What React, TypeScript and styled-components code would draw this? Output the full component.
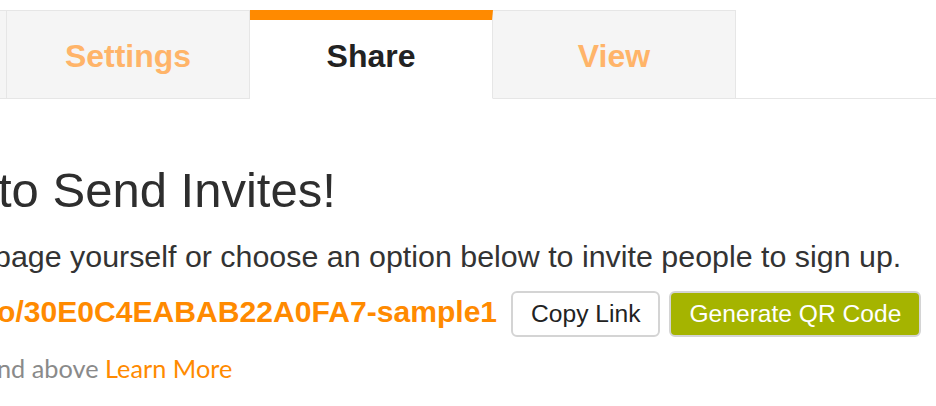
import React from "react";
import styled, { createGlobalStyle } from "styled-components";

const Global = createGlobalStyle`
  html, body { margin: 0; padding: 0; background: #ffffff; }
  body { font-family: "Liberation Sans", Arial, Helvetica, sans-serif; overflow: hidden; }
  #root { width: 936px; height: 406px; overflow: hidden; }
`;

const Page = styled.div`
  width: 936px;
  height: 406px;
  overflow: hidden;
  padding-top: 10px;
  box-sizing: border-box;
`;

const TabBar = styled.div`
  display: flex;
  border-bottom: 1px solid #e6e6e6;
  margin-left: -236px;
`;

const Tab = styled.div<{ $active?: boolean }>`
  flex: 0 0 243px;
  height: 89px;
  box-sizing: border-box;
  margin-bottom: -1px;
  display: flex;
  align-items: center;
  justify-content: center;
  font-size: 32px;
  font-weight: 700;
  border-right: 1px solid #e6e6e6;
  border-top: ${(p) => (p.$active ? "10px solid #ff8a00" : "1px solid #e6e6e6")};
  border-bottom: 1px solid ${(p) => (p.$active ? "#ffffff" : "#e6e6e6")};
  background: ${(p) => (p.$active ? "#ffffff" : "#f5f5f5")};
  color: ${(p) => (p.$active ? "#222222" : "#ffb469")};
  padding-top: ${(p) => (p.$active ? "0" : "3px")};
  padding-bottom: ${(p) => (p.$active ? "6px" : "0")};
`;

const Content = styled.div`
  display: flex;
  flex-direction: column;
  padding-top: 63px;
`;

const Heading = styled.h1<{ $shift: number }>`
  margin: 0 0 0 ${(p) => p.$shift}px;
  font-size: 49px;
  line-height: 56px;
  font-weight: 400;
  color: #2e2e2e;
  white-space: nowrap;
`;

const Lead = styled.p<{ $shift: number }>`
  margin: 20px 0 0 ${(p) => p.$shift}px;
  font-size: 30.4px;
  line-height: 36px;
  color: #333333;
  white-space: nowrap;
`;

const LinkRow = styled.div<{ $shift: number }>`
  display: flex;
  align-items: baseline;
  margin: 17px 0 0 ${(p) => p.$shift}px;
  white-space: nowrap;
`;

const ShareUrl = styled.span`
  font-size: 30.1px;
  font-weight: 700;
  color: #ff8a00;
  margin-right: 14px;
`;

const Button = styled.button<{ $primary?: boolean }>`
  height: 46px;
  box-sizing: border-box;
  padding: 0 18px;
  margin-right: 9px;
  border-radius: 6px;
  border: 2px solid #d4d4d4;
  font-family: "Liberation Sans", Arial, Helvetica, sans-serif;
  font-size: 24.6px;
  line-height: 42px;
  background: ${(p) => (p.$primary ? "#a5b400" : "#ffffff")};
  color: ${(p) => (p.$primary ? "#ffffff" : "#222222")};
  cursor: pointer;
`;

const Note = styled.div<{ $shift: number }>`
  margin: 16px 0 0 ${(p) => p.$shift}px;
  font-family: Lato, "Open Sans", sans-serif;
  font-size: 25.3px;
  line-height: 30px;
  color: #8a8a8a;
  white-space: nowrap;
`;

const LearnMore = styled.a`
  color: #ff8a00;
  text-decoration: none;
`;

export default function App() {
  return (
    <>
      <Global />
      <Page>
        <TabBar>
          <Tab>Edit</Tab>
          <Tab>Settings</Tab>
          <Tab $active>Share</Tab>
          <Tab>View</Tab>
        </TabBar>
        <Content>
          <Heading $shift={-2}>to Send Invites!</Heading>
          <Lead $shift={-6}>page yourself or choose an option below to invite people to sign up.</Lead>
          <LinkRow $shift={-3}>
            <ShareUrl>o/30E0C4EABAB22A0FA7-sample1</ShareUrl>
            <Button>Copy Link</Button>
            <Button $primary>Generate QR Code</Button>
          </LinkRow>
          <Note $shift={-3}>
            nd above <LearnMore href="#">Learn More</LearnMore>
          </Note>
        </Content>
      </Page>
    </>
  );
}
